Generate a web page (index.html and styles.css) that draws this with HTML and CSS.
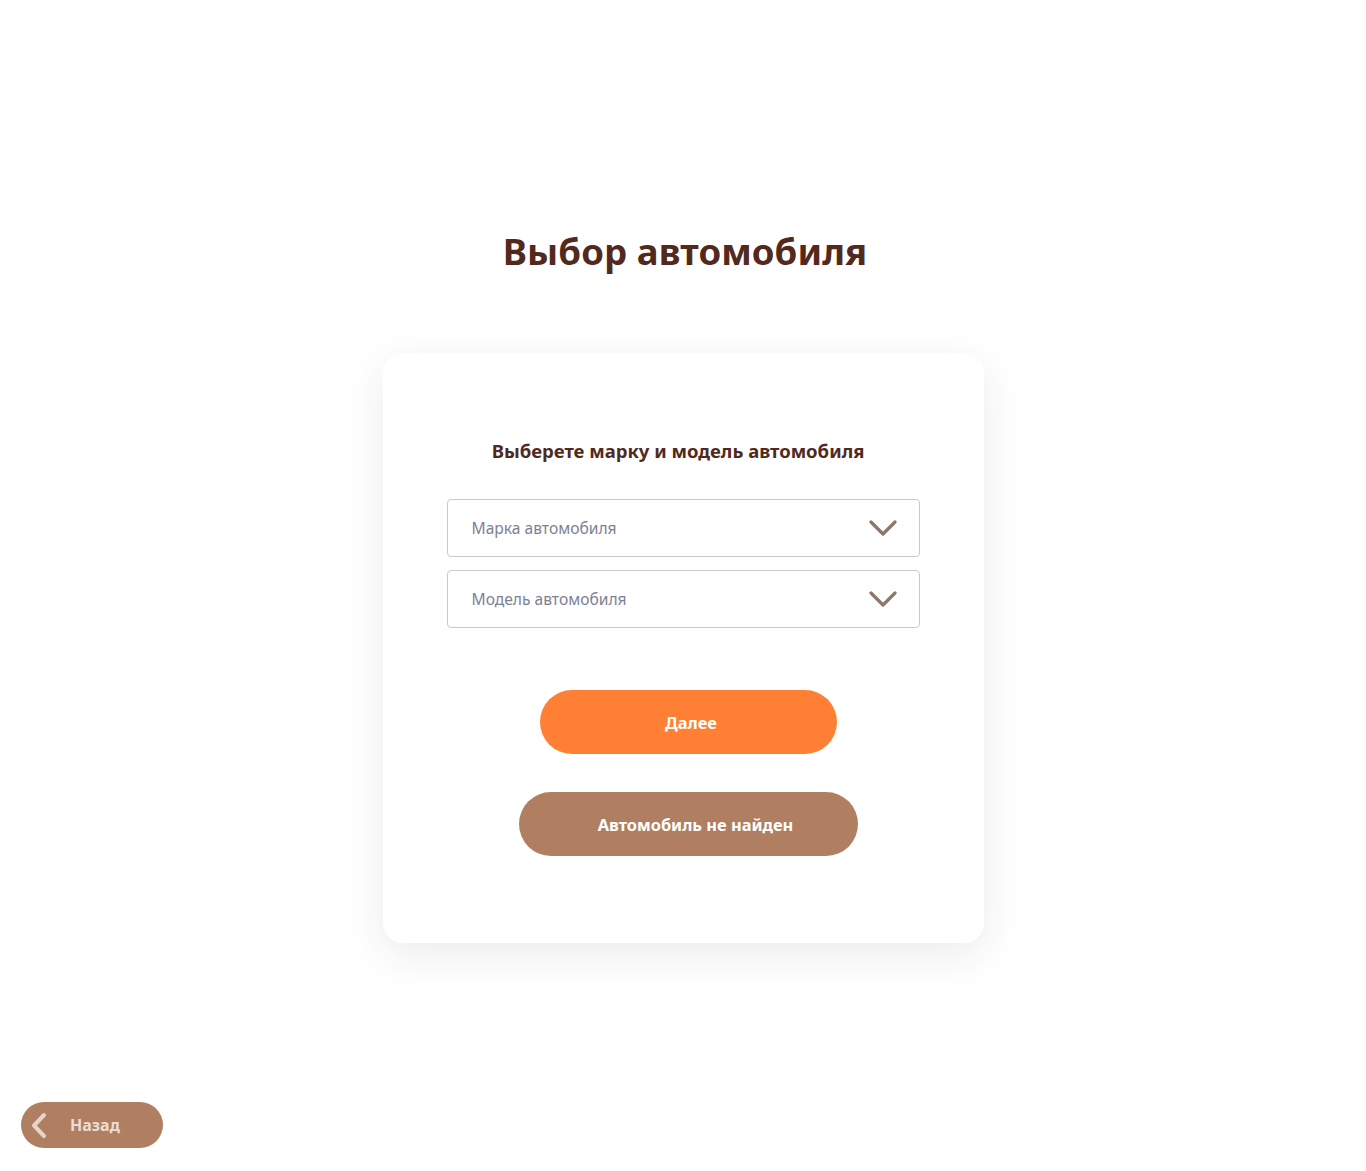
FILE: index.html
```html
<!DOCTYPE html>
<html lang="ru">
<head>
<meta charset="utf-8">
<title>Выбор автомобиля</title>
<link rel="stylesheet" href="styles.css">
</head>
<body>
<div class="page">
  <main class="main">
    <h1 class="title">Выбор автомобиля</h1>
    <section class="card">
      <h2 class="card-title">Выберете марку и модель автомобиля</h2>
      <div class="fields">
        <div class="select">
          <span class="select-text">Марка автомобиля</span>
          <svg class="chev" width="28" height="17" viewBox="0 0 28 17"><polyline points="2,2 14,14 26,2" fill="none" stroke="#8e766b" stroke-width="3.2" stroke-linecap="round" stroke-linejoin="round"/></svg>
        </div>
        <div class="select">
          <span class="select-text">Модель автомобиля</span>
          <svg class="chev" width="28" height="17" viewBox="0 0 28 17"><polyline points="2,2 14,14 26,2" fill="none" stroke="#8e766b" stroke-width="3.2" stroke-linecap="round" stroke-linejoin="round"/></svg>
        </div>
      </div>
      <div class="actions">
        <button class="btn btn-next">Далее</button>
        <button class="btn btn-notfound">Автомобиль не найден</button>
      </div>
    </section>
  </main>
  <footer class="footer">
    <button class="back">
      <svg width="18" height="27" viewBox="0 0 18 27"><polyline points="14,3 4,13.5 14,24" fill="none" stroke="#e6d3c9" stroke-width="4" stroke-linecap="round" stroke-linejoin="round"/></svg>
      <span>Назад</span>
    </button>
  </footer>
</div>
</body>
</html>
```
FILE: styles.css
```css
* { box-sizing: border-box; }
html, body { margin: 0; padding: 0; background: #fff; }
body { font-family: "Noto Sans", "Open Sans", sans-serif; }
.page {
  min-height: 100vh;
  display: flex;
  flex-direction: column;
}
.main {
  flex: 1;
  display: flex;
  flex-direction: column;
  align-items: center;
  padding-top: 229px;
}
.title {
  margin: 0 0 0 4px;
  font-size: 36.5px;
  line-height: 44px;
  font-weight: 700;
  color: #52291d;
  letter-spacing: 0.1px;
}
.card {
  margin-top: 80px;
  width: 601px;
  padding: 86px 64px 87px;
  background: #fff;
  border-radius: 20px;
  box-shadow: 0 12px 40px rgba(40, 40, 60, 0.09);
  display: flex;
  flex-direction: column;
  align-items: center;
}
.card-title {
  margin: 0 10px 0 0;
  font-size: 18.5px;
  line-height: 24px;
  font-weight: 700;
  color: #52291d;
  text-align: center;
}
.fields {
  margin-top: 36px;
  width: 100%;
  display: flex;
  flex-direction: column;
  gap: 13px;
}
.select {
  height: 58px;
  border: 1px solid #c9c9d3;
  border-radius: 4px;
  display: flex;
  align-items: center;
  justify-content: space-between;
  padding: 0 22px 0 24px;
}
.select-text {
  font-size: 15.6px;
  color: #7d8196;
}
.chev { display: block; }
.actions {
  margin-top: 62px;
  padding-left: 11px;
  display: flex;
  flex-direction: column;
  align-items: center;
  gap: 38px;
}
.btn {
  border: 0;
  height: 64px;
  border-radius: 32px;
  font-family: inherit;
  font-size: 16.4px;
  font-weight: 700;
  color: #fff;
  cursor: pointer;
}
.btn-next {
  width: 297px;
  background: #ff7f35;
  padding: 0 0 0 5px;
}
.btn-notfound {
  width: 339px;
  background: #b07f62;
  padding: 0 0 0 14px;
}
.footer {
  padding: 0 0 23px 21px;
}
.back {
  width: 142px;
  height: 46px;
  border: 0;
  border-radius: 23px;
  background: #b07f62;
  display: flex;
  align-items: center;
  gap: 22px;
  padding: 0 0 0 9px;
  font-family: inherit;
  font-size: 16px;
  font-weight: 700;
  color: #ecdcd3;
}
.back svg { display: block; }
```
